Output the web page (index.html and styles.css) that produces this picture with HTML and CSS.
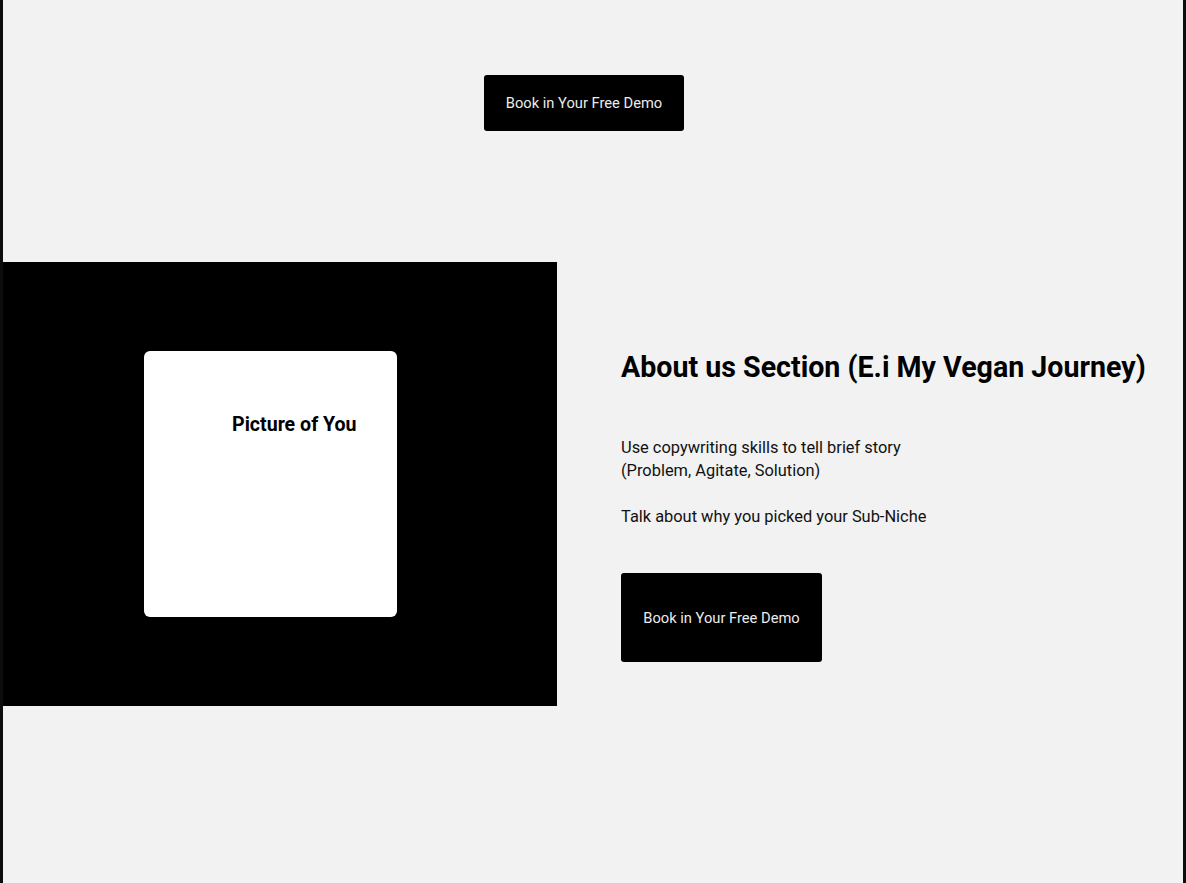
FILE: index.html
```html
<!DOCTYPE html>
<html>
<head>
<meta charset="utf-8">
<link rel="stylesheet" href="styles.css">
</head>
<body>
<div class="page">
  <section class="hero">
    <a class="btn btn-top" href="#">Book in Your Free Demo</a>
  </section>
  <section class="about">
    <div class="photo-block">
      <div class="photo-card">
        <span class="photo-label">Picture of You</span>
      </div>
    </div>
    <div class="about-text">
      <h2 class="about-title">About us Section (E.i My Vegan Journey)</h2>
      <p class="about-copy">Use copywriting skills to tell brief story<br>(Problem, Agitate, Solution)</p>
      <p class="about-copy">Talk about why you picked your Sub-Niche</p>
      <a class="btn btn-about" href="#">Book in Your Free Demo</a>
    </div>
  </section>
</div>
</body>
</html>
```

FILE: styles.css
```css
html, body {
  margin: 0;
  padding: 0;
  background: #f2f2f2;
}
.page {
  box-sizing: border-box;
  width: 1186px;
  height: 883px;
  border-left: 3px solid #0d0d0d;
  border-right: 3px solid #0d0d0d;
  background: #f2f2f2;
  font-family: Roboto, "Liberation Sans", sans-serif;
  color: #000;
  overflow: hidden;
}
.hero {
  height: 262px;
  display: flex;
  justify-content: center;
  padding-top: 75px;
  padding-right: 18px;
  box-sizing: border-box;
}
.btn {
  display: flex;
  align-items: center;
  justify-content: center;
  background: #000;
  color: #ececec;
  text-decoration: none;
  font-size: 14.7px;
  border-radius: 3px;
}
.btn-top {
  width: 200px;
  height: 56px;
}
.about {
  display: flex;
  align-items: flex-start;
}
.photo-block {
  width: 554px;
  height: 444px;
  background: #000;
  display: flex;
  align-items: center;
  padding-left: 141px;
  box-sizing: border-box;
  flex-shrink: 0;
}
.photo-card {
  width: 253px;
  height: 266px;
  background: #fff;
  border-radius: 6px;
  box-sizing: border-box;
  padding: 62px 0 0 88px;
}
.photo-label {
  font-weight: 700;
  font-size: 19.6px;
}
.about-text {
  padding-left: 64px;
  padding-top: 88px;
}
.about-title {
  margin: 0 0 52px;
  font-size: 28.6px;
  font-weight: 700;
  line-height: 34px;
  white-space: nowrap;
}
.about-copy {
  margin: 0 0 23px;
  font-size: 16.4px;
  line-height: 23px;
  color: #111;
}
.btn-about {
  width: 201px;
  height: 89px;
  margin-top: 45px;
}
```
